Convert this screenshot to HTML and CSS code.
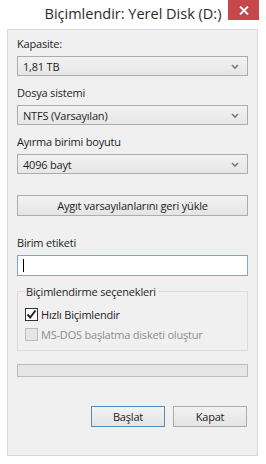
FILE: index.html
```html
<!DOCTYPE html>
<html lang="tr">
<head>
    <meta charset="UTF-8">
    <meta name="viewport" content="width=device-width, initial-scale=1.0">
    <title>Biçimlendir: Yerel Disk (D:)</title>
    <link rel="stylesheet" href="styles.css">
</head>
<body>

    <div class="window">
        <!-- Title bar -->
        <div class="titlebar">
            <span class="title">Biçimlendir: Yerel Disk (D:)</span>
            <div class="close-btn">
                <svg width="10" height="9" viewBox="0 0 10 9">
                    <path d="M1 0.5 L9 8.5 M9 0.5 L1 8.5" stroke="#fff" stroke-width="1.8" fill="none"/>
                </svg>
            </div>
        </div>

        <div class="panel">
            <div class="label">Kapasite:</div>
            <div class="combo">
                <span>1,81 TB</span>
                <svg class="arrow" width="8" height="6" viewBox="0 0 8 6"><path d="M1 1 L4 4 L7 1" stroke="#7a7a7a" stroke-width="1.6" fill="none"/></svg>
            </div>

            <div class="label">Dosya sistemi</div>
            <div class="combo">
                <span>NTFS (Varsayılan)</span>
                <svg class="arrow" width="8" height="6" viewBox="0 0 8 6"><path d="M1 1 L4 4 L7 1" stroke="#7a7a7a" stroke-width="1.6" fill="none"/></svg>
            </div>

            <div class="label">Ayırma birimi boyutu</div>
            <div class="combo">
                <span>4096 bayt</span>
                <svg class="arrow" width="8" height="6" viewBox="0 0 8 6"><path d="M1 1 L4 4 L7 1" stroke="#7a7a7a" stroke-width="1.6" fill="none"/></svg>
            </div>

            <div class="btn btn-wide">Aygıt varsayılanlarını geri yükle</div>

            <div class="label label-gap">Birim etiketi</div>
            <div class="textbox"><span class="caret"></span></div>

            <fieldset class="group">
                <legend>Biçimlendirme seçenekleri</legend>
                <div class="check-row">
                    <span class="checkbox checked">
                        <svg width="11" height="11" viewBox="0 0 11 11"><path d="M1.5 5.5 L4.2 8.5 L9.5 1.5" stroke="#222" stroke-width="2" fill="none"/></svg>
                    </span>
                    <span>Hızlı Biçimlendir</span>
                </div>
                <div class="check-row disabled">
                    <span class="checkbox"></span>
                    <span>MS-DOS başlatma disketi oluştur</span>
                </div>
            </fieldset>

            <div class="progress"></div>

            <div class="actions">
                <div class="btn btn-default">Başlat</div>
                <div class="btn">Kapat</div>
            </div>
        </div>
    </div>

</body>
</html>
```

FILE: styles.css
```css
/* Global Styles */
body {
    margin: 0;
    background-color: #ffffff;
    font-family: 'Open Sans', 'DejaVu Sans', sans-serif;
    font-size: 11px;
    letter-spacing: -0.2px;
    color: #1e1e1e;
}

.window {
    width: 266px;
    height: 464px;
    background-color: #ffffff;
    display: flex;
    flex-direction: column;
}

/* Title bar */
.titlebar {
    position: relative;
    height: 30px;
    display: flex;
    justify-content: center;
    align-items: center;
}

.title {
    font-size: 14.5px;
    letter-spacing: 0;
    color: #2b2b2b;
    margin-top: -2px;
}

.close-btn {
    position: absolute;
    top: 0;
    right: 7px;
    width: 31px;
    height: 20px;
    background-color: #c7474b;
    display: flex;
    justify-content: center;
    align-items: center;
}

/* Main panel */
.panel {
    margin: 0 8px 8px 7px;
    height: 426px;
    border: 1px solid #d9d9d9;
    background-color: #f0f0f0;
    padding: 7px 9px 0 9px;
    display: flex;
    flex-direction: column;
}

.label {
    height: 14px;
    line-height: 14px;
    margin-bottom: 5px;
}

.combo {
    height: 18px;
    border: 1px solid #acacac;
    background: linear-gradient(#f2f2f2, #e6e6e6);
    display: flex;
    align-items: center;
    justify-content: space-between;
    padding: 0 8px 0 5px;
    margin-bottom: 10px;
}

.arrow {
    margin-top: 1px;
}

/* Buttons */
.btn {
    height: 19px;
    border: 1px solid #acacac;
    background: linear-gradient(#f2f2f2, #e4e4e4);
    display: flex;
    align-items: center;
    justify-content: center;
}

.btn-wide {
    margin-top: 11px;
}

.btn-default {
    border-color: #4d8ccb;
}

.label-gap {
    margin-top: 20px;
}

.textbox {
    height: 19px;
    border: 1px solid #7aa7d6;
    background-color: #ffffff;
    display: flex;
    align-items: center;
    padding-left: 5px;
}

.caret {
    width: 1px;
    height: 13px;
    background-color: #000;
}

/* Options group */
.group {
    margin: 8px 0 0 0;
    padding: 5px 7px 6px 7px;
    border: 1px solid #dcdcdc;
    min-width: 0;
}

.group legend {
    padding: 0 2px;
    margin-left: -1px;
}

.check-row {
    display: flex;
    align-items: center;
    gap: 3px;
    height: 20px;
}

.checkbox {
    width: 11px;
    height: 11px;
    border: 1px solid #333;
    background-color: #fff;
    display: flex;
    align-items: center;
    justify-content: center;
}

.disabled {
    color: #8e8e8e;
}

.disabled .checkbox {
    border-color: #bcbcbc;
    background-color: #e6e6e6;
}

.progress {
    margin-top: 13px;
    height: 11px;
    border: 1px solid #bcbcbc;
    background-color: #e6e6e6;
}

.actions {
    margin-top: 29px;
    display: flex;
    justify-content: flex-end;
    gap: 8px;
    padding-right: 1px;
}

.actions .btn {
    width: 72px;
}
```
